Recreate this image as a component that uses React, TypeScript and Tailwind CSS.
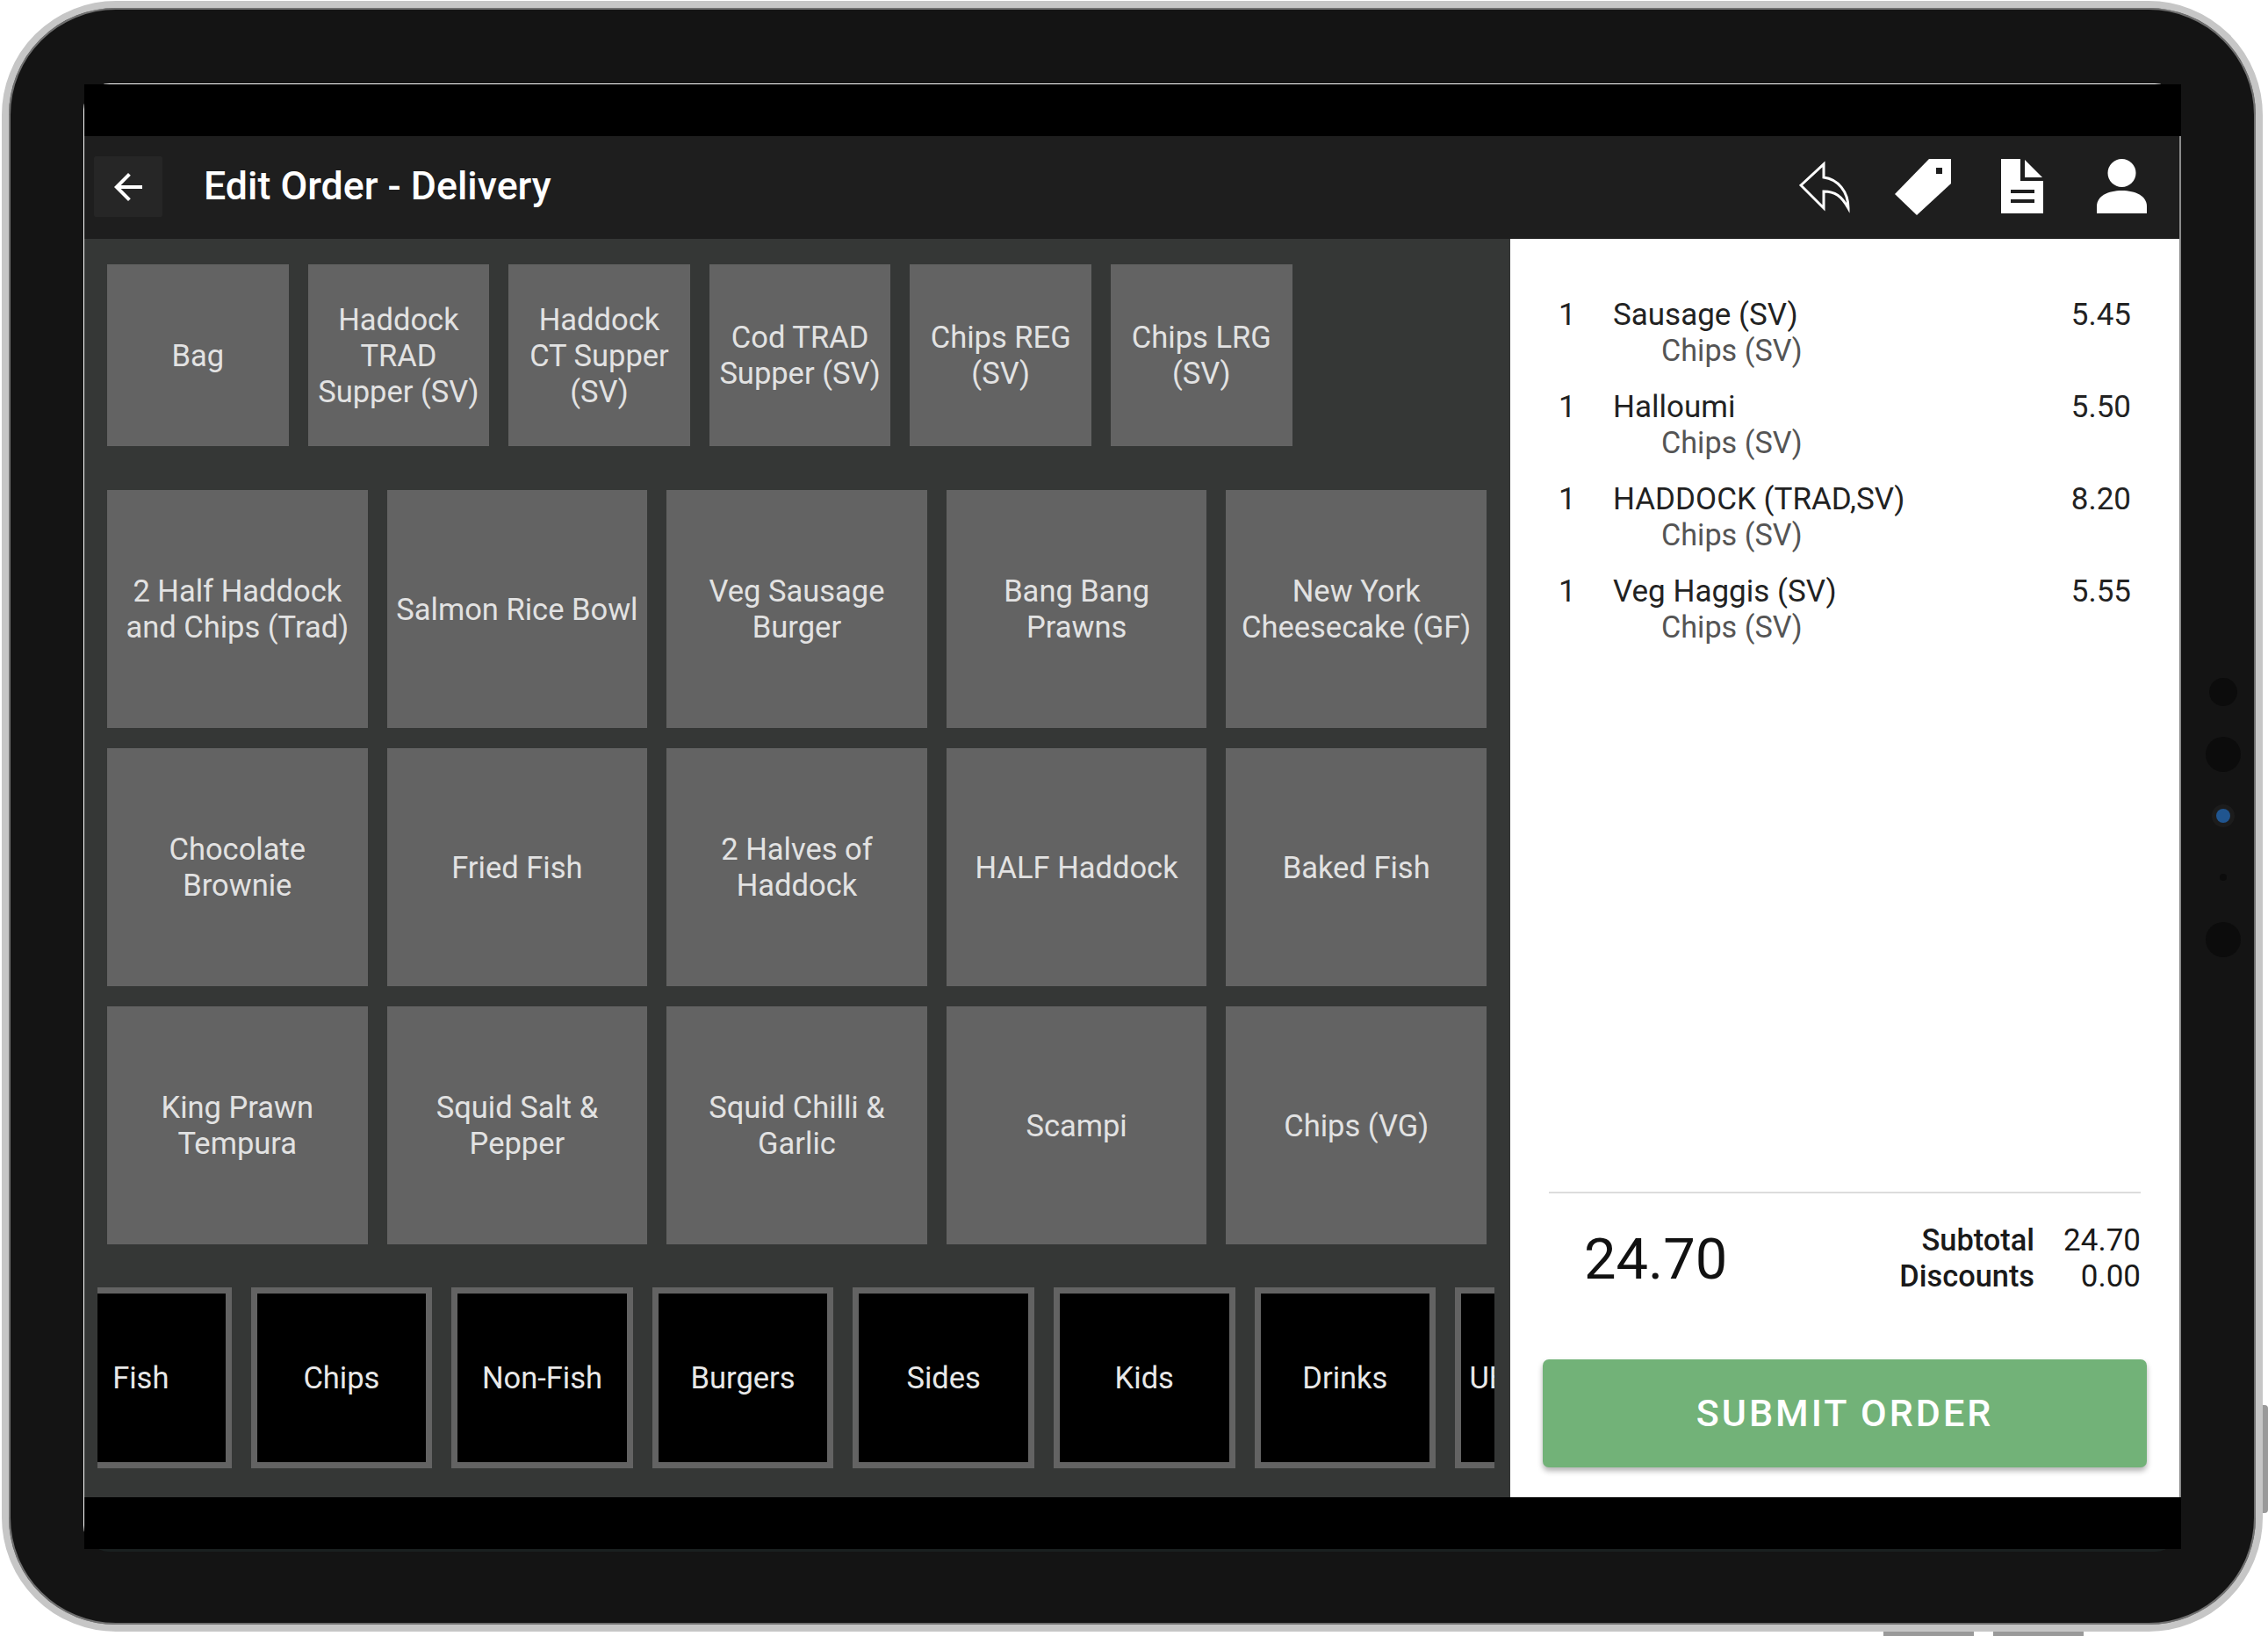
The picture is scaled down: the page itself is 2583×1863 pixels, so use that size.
const topItems = [
  "Bag",
  "Haddock\nTRAD\nSupper (SV)",
  "Haddock\nCT Supper\n(SV)",
  "Cod TRAD\nSupper (SV)",
  "Chips REG\n(SV)",
  "Chips LRG\n(SV)",
];

const gridItems = [
  "2 Half Haddock\nand Chips (Trad)",
  "Salmon Rice Bowl",
  "Veg Sausage\nBurger",
  "Bang Bang\nPrawns",
  "New York\nCheesecake (GF)",
  "Chocolate\nBrownie",
  "Fried Fish",
  "2 Halves of\nHaddock",
  "HALF Haddock",
  "Baked Fish",
  "King Prawn\nTempura",
  "Squid Salt &\nPepper",
  "Squid Chilli &\nGarlic",
  "Scampi",
  "Chips (VG)",
];

const categories = ["Fish", "Chips", "Non-Fish", "Burgers", "Sides", "Kids", "Drinks", "UBER EATS"];

const orderLines = [
  { name: "Sausage (SV)", price: "5.45" },
  { name: "Halloumi", price: "5.50" },
  { name: "HADDOCK (TRAD,SV)", price: "8.20" },
  { name: "Veg Haggis (SV)", price: "5.55" },
];

function ItemButton({ label, className }: { label: string; className: string }) {
  return (
    <div
      className={`flex items-center justify-center whitespace-pre-line bg-[#636363] pt-[1px] text-center text-[34.5px] leading-[41px] text-[#e2e2e2] ${className}`}
    >
      {label}
    </div>
  );
}

function HeaderIcons() {
  return (
    <div className="flex items-center text-white">
      {/* reply */}
      <svg width="58" height="64" viewBox="0 0 58 64" className="mr-[51px]">
        <path
          d="M2 30 L28 6 V21 C44 23 56 37 56 56 C48 42 41 37 28 37 V56 Z"
          fill="none"
          stroke="currentColor"
          strokeWidth="3"
          strokeLinejoin="miter"
        />
      </svg>
      {/* tag */}
      <svg width="64" height="64" viewBox="0 0 64 64" className="mr-[57px]">
        <path d="M39 0 H64 V28 L25 64 L0 40 Z" fill="currentColor" />
        <rect x="47" y="10" width="7" height="7" fill="#1e1e1e" />
      </svg>
      {/* document */}
      <svg width="48" height="64" viewBox="0 0 48 64" className="mr-[61px]">
        <path d="M0 0 H22 V25 H48 V62 H0 Z" fill="currentColor" />
        <path d="M27 1 L47 21 H27 Z" fill="currentColor" />
        <rect x="11" y="35" width="27" height="4" fill="#1e1e1e" />
        <rect x="11" y="46" width="27" height="4" fill="#1e1e1e" />
      </svg>
      {/* person */}
      <svg width="57" height="64" viewBox="0 0 57 64">
        <ellipse cx="28.5" cy="16" rx="16" ry="16" fill="currentColor" />
        <path d="M0 62 V54 C0 42 13 36 28.5 36 C44 36 57 42 57 54 V62 Z" fill="currentColor" />
      </svg>
    </div>
  );
}

export default function App() {
  return (
    <div className="relative h-[1863px] w-[2583px] overflow-hidden bg-white pl-[2px] pt-[1px] font-['Roboto',sans-serif]">
      {/* side and bottom hardware buttons */}
      <div className="absolute left-[2574px] top-[1600px] h-[123px] w-[9px] rounded-r bg-[#9a9a9a]" />
      <div className="absolute left-[2145px] top-[1856px] h-[7px] w-[103px] bg-[#9a9a9a]" />
      <div className="absolute left-[2270px] top-[1856px] h-[7px] w-[103px] bg-[#9a9a9a]" />

      {/* tablet frame */}
      <div className="relative h-[1857px] w-[2575px] rounded-[130px] border-[8px] border-[#c6c6c6] bg-[#141414] pl-[85px] pt-[86px] shadow-[inset_0_0_0_2px_#707070]">
        {/* camera + sensors */}
        <div className="absolute left-[2506px] top-[763px] h-[32px] w-[32px] rounded-full bg-[#0c0c0c]" />
        <div className="absolute left-[2502px] top-[830px] h-[40px] w-[40px] rounded-full bg-[#0c0c0c]" />
        <div className="absolute left-[2509px] top-[907px] h-[26px] w-[26px] rounded-full bg-[#1c1c1c]" />
        <div className="absolute left-[2514px] top-[912px] h-[16px] w-[16px] rounded-full bg-[#20558f]" />
        <div className="absolute left-[2518px] top-[986px] h-[8px] w-[8px] rounded-full bg-[#0c0c0c]" />
        <div className="absolute left-[2502px] top-[1041px] h-[40px] w-[40px] rounded-full bg-[#0c0c0c]" />

        {/* screen edge */}
        <div className="h-[1672px] w-[2389px] rounded-[30px] border-b-[3px] border-l border-t border-b-[#1a2020] border-l-white border-t-white">
          <div className="flex h-[1668px] w-[2388px] flex-col bg-black">
            <div className="h-[59px] shrink-0 bg-black" />
            <div className="flex min-h-0 flex-1 flex-col border-r-2 border-r-[#8a8a8a]">
              {/* header */}
              <div className="flex h-[117px] shrink-0 items-center justify-between bg-[#1e1e1e] pb-[2px] pl-[11px] pr-[37px]">
                <div className="flex items-center">
                  <div className="flex h-[69px] w-[78px] items-center justify-center rounded-[2px] bg-[#262626]">
                    <svg width="48" height="48" viewBox="0 0 24 24" fill="white">
                      <path d="M20 11H7.83l5.59-5.59L12 4l-8 8 8 8 1.41-1.41L7.83 13H20v-2z" />
                    </svg>
                  </div>
                  <div className="ml-[47px] text-[44.7px] font-medium text-white">Edit Order - Delivery</div>
                </div>
                <HeaderIcons />
              </div>

              <div className="flex min-h-0 flex-1">
                {/* left panel */}
                <div className="w-[1624px] shrink-0 bg-[#353736] pt-[29px]">
                  <div className="flex gap-[22px] pl-[26px]">
                    {topItems.map((label) => (
                      <ItemButton key={label} label={label} className="h-[207px] w-[206.6px]" />
                    ))}
                  </div>
                  <div className="ml-[26px] mt-[50px] grid w-[1571px] grid-cols-5 gap-x-[22px] gap-y-[23px]">
                    {gridItems.map((label) => (
                      <ItemButton key={label} label={label} className="h-[271px]" />
                    ))}
                  </div>
                  <div className="ml-[15px] mt-[49px] w-[1591px] overflow-hidden">
                    <div className="-ml-[54px] flex gap-[22px]">
                      {categories.map((label) => (
                        <div
                          key={label}
                          className="flex h-[206px] w-[206.6px] shrink-0 items-center justify-center whitespace-nowrap border-[7px] border-[#636363] bg-black pt-[1px] text-[34.5px] text-[#e8e8e8]"
                        >
                          {label}
                        </div>
                      ))}
                    </div>
                  </div>
                </div>

                {/* order panel */}
                <div className="flex min-w-0 flex-1 flex-col bg-white">
                  <div className="flex-1 pl-[55px] pr-[55px] pt-[66px]">
                    {orderLines.map((line) => (
                      <div key={line.name} className="mb-[23px] flex text-[35px] leading-[41px] text-[#222]">
                        <div className="w-[62px] shrink-0">1</div>
                        <div className="flex-1">
                          <div>{line.name}</div>
                          <div className="ml-[55px] text-[34.2px] text-[#555]">Chips (SV)</div>
                        </div>
                        <div>{line.price}</div>
                      </div>
                    ))}
                  </div>
                  <div className="mx-[44px] h-[2px] bg-[#dcdcdc]" />
                  <div className="mt-[33px] flex items-center justify-between pl-[84px] pr-[44px]">
                    <div className="mt-[3px] text-[65px] leading-none text-[#111]">24.70</div>
                    <div className="grid grid-cols-[auto_auto] gap-x-[33px] text-right text-[35px] leading-[41px] text-[#1a1a1a]">
                      <div className="text-[34.4px] font-medium">Subtotal</div>
                      <div>24.70</div>
                      <div className="text-[34.4px] font-medium">Discounts</div>
                      <div>0.00</div>
                    </div>
                  </div>
                  <div className="mx-[37px] mb-[34px] mt-[74px] flex h-[123px] items-center justify-center rounded-[7px] bg-[#72b278] text-[43px] font-medium tracking-[3px] text-white shadow-[0_4px_6px_rgba(0,0,0,0.3)]">
                    SUBMIT ORDER
                  </div>
                </div>
              </div>
            </div>
            <div className="h-[59px] shrink-0 bg-black" />
          </div>
        </div>
      </div>
    </div>
  );
}
